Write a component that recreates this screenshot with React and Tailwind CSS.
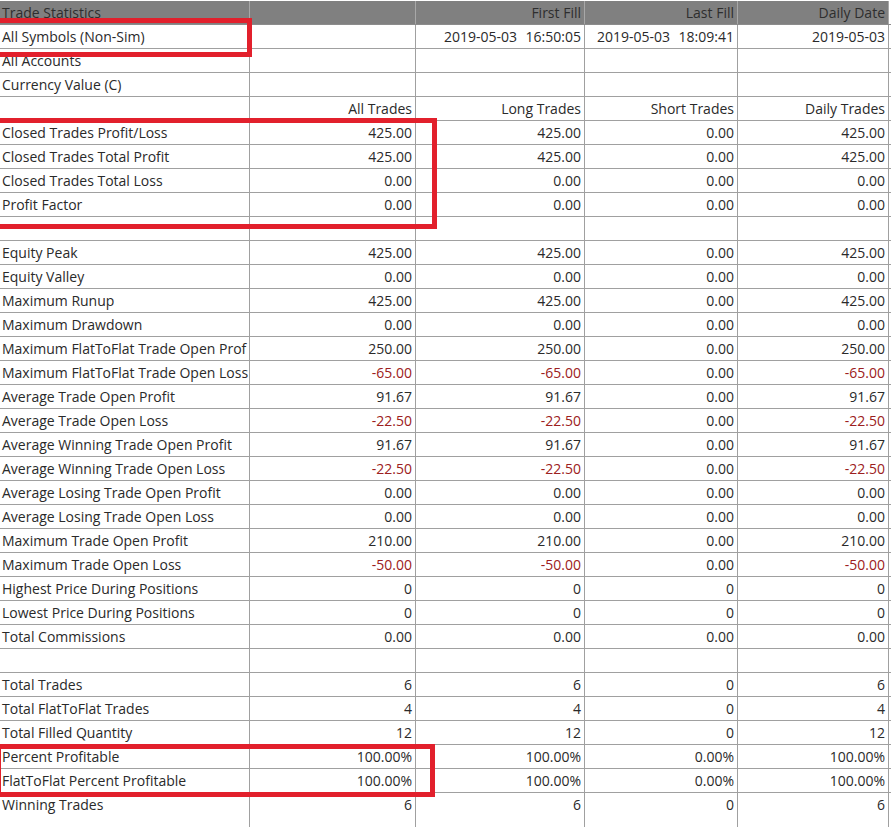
const F = "0.00";
const rows = [
  ["All Symbols (Non-Sim)", "", "2019-05-03\u00a0\u00a0\u200a16:50:05", "2019-05-03\u00a0\u00a0\u200a18:09:41", "2019-05-03"],
  ["All Accounts", "", "", "", ""],
  ["Currency Value (C)", "", "", "", ""],
  ["", "All Trades", "Long Trades", "Short Trades", "Daily Trades"],
  ["Closed Trades Profit/Loss", "425.00", "425.00", F, "425.00"],
  ["Closed Trades Total Profit", "425.00", "425.00", F, "425.00"],
  ["Closed Trades Total Loss", F, F, F, F],
  ["Profit Factor", F, F, F, F],
  ["", "", "", "", ""],
  ["Equity Peak", "425.00", "425.00", F, "425.00"],
  ["Equity Valley", F, F, F, F],
  ["Maximum Runup", "425.00", "425.00", F, "425.00"],
  ["Maximum Drawdown", F, F, F, F],
  ["Maximum FlatToFlat Trade Open Prof", "250.00", "250.00", F, "250.00"],
  ["Maximum FlatToFlat Trade Open Loss", "-65.00", "-65.00", F, "-65.00"],
  ["Average Trade Open Profit", "91.67", "91.67", F, "91.67"],
  ["Average Trade Open Loss", "-22.50", "-22.50", F, "-22.50"],
  ["Average Winning Trade Open Profit", "91.67", "91.67", F, "91.67"],
  ["Average Winning Trade Open Loss", "-22.50", "-22.50", F, "-22.50"],
  ["Average Losing Trade Open Profit", F, F, F, F],
  ["Average Losing Trade Open Loss", F, F, F, F],
  ["Maximum Trade Open Profit", "210.00", "210.00", F, "210.00"],
  ["Maximum Trade Open Loss", "-50.00", "-50.00", F, "-50.00"],
  ["Highest Price During Positions", "0", "0", "0", "0"],
  ["Lowest Price During Positions", "0", "0", "0", "0"],
  ["Total Commissions", F, F, F, F],
  ["", "", "", "", ""],
  ["Total Trades", "6", "6", "0", "6"],
  ["Total FlatToFlat Trades", "4", "4", "0", "4"],
  ["Total Filled Quantity", "12", "12", "0", "12"],
  ["Percent Profitable", "100.00%", "100.00%", "0.00%", "100.00%"],
  ["FlatToFlat Percent Profitable", "100.00%", "100.00%", "0.00%", "100.00%"],
];
const last = ["Winning Trades", "6", "6", "0", "6"];

function Cell({ w, children, label, red, head }) {
  return (
    <div
      className={
        "h-full shrink-0 overflow-hidden whitespace-nowrap border-r " +
        (head ? "border-[#a8a8a8] bg-[#808080] " : "border-[#a0a0a0] ") +
        (label ? "pl-[2px] text-left " : "pr-[3px] text-right ") +
        (red ? "text-[#9c2020] " : head ? "text-[#2e2e2e] " : "text-[#2a2a2a] ") +
        w
      }
    >
      {children}
    </div>
  );
}

function Row({ r, head, open }) {
  return (
    <div className={"flex h-6 " + (open ? "" : head ? "border-b border-[#8c8c8c]" : "border-b border-[#a0a0a0]")}>
      <Cell w="w-[250px]" label head={head}>{r[0]}</Cell>
      <Cell w="w-[166px]" red={r[1].startsWith("-")} head={head}>{r[1]}</Cell>
      <Cell w="w-[169px]" red={r[2].startsWith("-")} head={head}>{r[2]}</Cell>
      <Cell w="w-[153px]" head={head}>{r[3]}</Cell>
      <Cell w="w-[151px]" red={r[4].startsWith("-")} head={head}>{r[4]}</Cell>
    </div>
  );
}

function Filler() {
  return (
    <div className="flex h-[11px]">
      <div className="h-full w-[250px] shrink-0 border-r border-[#a0a0a0]" />
      <div className="h-full w-[166px] shrink-0 border-r border-[#a0a0a0]" />
      <div className="h-full w-[169px] shrink-0 border-r border-[#a0a0a0]" />
      <div className="h-full w-[153px] shrink-0 border-r border-[#a0a0a0]" />
      <div className="h-full w-[151px] shrink-0 border-r border-[#a0a0a0]" />
    </div>
  );
}

export default function App() {
  return (
    <div className="relative h-[827px] w-[891px] overflow-hidden bg-white pt-px font-['Open_Sans','Noto_Sans',sans-serif] text-[14px] leading-[23px]">
      <Row head r={["Trade Statistics", "", "First Fill", "Last Fill", "Daily Date"]} />
      {rows.map((r, i) => (
        <Row key={i} r={r} />
      ))}
      <Row open r={last} />
      <Filler />
      <div className="absolute left-[-8px] top-[18px] h-[39px] w-[260px] border-[5px] border-[#e2202c]" />
      <div className="absolute left-[-8px] top-[118px] h-[111px] w-[445px] border-[5px] border-[#e2202c]" />
      <div className="absolute left-0 top-[744px] h-[53px] w-[435px] border-[5px] border-l-[1px] border-[#e2202c]" />
    </div>
  );
}
